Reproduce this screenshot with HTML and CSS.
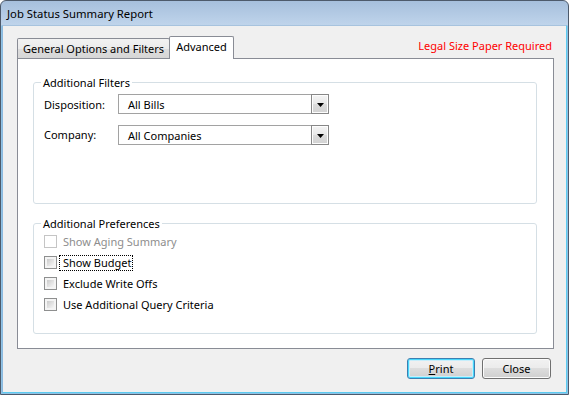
FILE: index.html
```html
<!DOCTYPE html>
<html lang="en">
<head>
<meta charset="utf-8">
<title>Job Status Summary Report</title>
<link rel="stylesheet" href="styles.css">
</head>
<body>
<div class="window">
  <div class="titlebar"><span class="title">Job Status Summary Report</span></div>
  <div class="client">
    <div class="tabrow">
      <div class="tab tab-general">General Options and Filters</div>
      <div class="tab tab-active">Advanced</div>
      <div class="note">Legal Size Paper Required</div>
    </div>
    <div class="panel">
      <fieldset class="group group-filters">
        <legend class="group-title">Additional Filters</legend>
        <div class="fields">
          <div class="field">
            <span class="field-label">Disposition:</span>
            <div class="combo">
              <span class="combo-value">All Bills</span>
              <span class="combo-btn"><svg width="7" height="4" viewBox="0 0 7 4"><polygon points="0,0 7,0 3.5,4" fill="#000"/></svg></span>
            </div>
          </div>
          <div class="field">
            <span class="field-label field-label-up">Company:</span>
            <div class="combo">
              <span class="combo-value">All Companies</span>
              <span class="combo-btn"><svg width="7" height="4" viewBox="0 0 7 4"><polygon points="0,0 7,0 3.5,4" fill="#000"/></svg></span>
            </div>
          </div>
        </div>
      </fieldset>
      <fieldset class="group group-prefs">
        <legend class="group-title">Additional Preferences</legend>
        <div class="checks">
          <div class="check check-disabled"><span class="cb"></span><span class="check-label">Show Aging Summary</span></div>
          <div class="check"><span class="cb"></span><span class="check-label check-focus">Show Budget</span></div>
          <div class="check"><span class="cb"></span><span class="check-label">Exclude Write Offs</span></div>
          <div class="check"><span class="cb"></span><span class="check-label">Use Additional Query Criteria</span></div>
        </div>
      </fieldset>
    </div>
    <div class="buttons">
      <button class="btn btn-default" type="button"><span class="accel">P</span>rint</button>
      <button class="btn btn-close" type="button">Close</button>
    </div>
  </div>
</div>
</body>
</html>
```

FILE: styles.css
```css
html, body {
  margin: 0;
  padding: 0;
  background: #ffffff;
}

body {
  font-family: "Noto Sans", "Open Sans", sans-serif;
  font-size: 11px;
  color: #000000;
}

.window {
  box-sizing: border-box;
  width: 569px;
  height: 395px;
  border: 1px solid #4d5a6b;
  border-radius: 6px 6px 0 0;
  padding: 0 1px 1px 1px;
  background: linear-gradient(#a6bfdc, #bfd4eb 24px, #8fc3e6 25px, #8fc3e6);
  display: flex;
  flex-direction: column;
  overflow: hidden;
}

.titlebar {
  height: 24px;
  flex: none;
  display: flex;
  align-items: center;
  padding-left: 5px;
}

.title {
  font-size: 11.3px;
  line-height: 15px;
  color: #000;
}

.client {
  flex: 1;
  background: #f0f0f0;
  border: 1px solid #a7c3de;
  border-right-color: #5ccbf0;
  border-bottom-color: #5ccbf0;
  border-left-color: #8cb9de;
  display: flex;
  flex-direction: column;
  padding: 10px 12px 0 14px;
}

/* tabs */
.tabrow {
  height: 22px;
  display: flex;
  align-items: flex-end;
  position: relative;
  z-index: 1;
}

.tab {
  box-sizing: border-box;
  height: 20px;
  border: 1px solid #898c95;
  border-bottom: none;
  border-radius: 2px 2px 0 0;
  background: linear-gradient(#f2f2f2, #ebebeb 50%, #dddddd 50%, #d6d6d6);
  text-align: center;
  line-height: 19px;
  white-space: nowrap;
}

.tab-general {
  width: 153px;
}

.tab-active {
  width: 65px;
  height: 23px;
  margin-left: -1px;
  margin-bottom: -1px;
  background: #ffffff;
  line-height: 19px;
  padding-bottom: 2px;
}

.note {
  align-self: flex-start;
  margin-left: auto;
  margin-top: 2px;
  padding-right: 2px;
  color: #ff0000;
  line-height: 15px;
  white-space: nowrap;
}

/* panel */
.panel {
  box-sizing: border-box;
  height: 291px;
  border: 1px solid #898c95;
  background: #ffffff;
  padding: 16px 16px 0 15px;
  display: flex;
  flex-direction: column;
  gap: 12px;
}

.group {
  box-sizing: border-box;
  margin: 0;
  padding: 0 0 0 10px;
  border: 1px solid #d5dfe5;
  border-radius: 3px;
  min-width: 0;
}

.group-filters {
  height: 129px;
}

.group-prefs {
  height: 118px;
}

.group-title {
  margin-left: -3px;
  padding: 0 2px;
  line-height: 15px;
  color: #000;
}

.fields {
  display: flex;
  flex-direction: column;
  gap: 11px;
  padding-top: 4px;
}

.field {
  display: flex;
  align-items: center;
  height: 20px;
}

.field-label {
  width: 74px;
  flex: none;
  line-height: 15px;
}

.field-label-up {
  position: relative;
  top: -1px;
}

.combo {
  box-sizing: border-box;
  width: 211px;
  height: 20px;
  border: 1px solid #a2a2a2;
  display: flex;
  align-items: center;
  position: relative;
  background: #fff;
}

.combo-value {
  flex: 1;
  padding-left: 9px;
  line-height: 15px;
}

.combo-btn {
  box-sizing: border-box;
  width: 18px;
  height: 20px;
  margin: -1px -1px -1px 0;
  border: 1px solid #878787;
  box-shadow: inset 0 0 0 1px #fdfdfd;
  background: linear-gradient(#f4f4f4, #e8e8e8 50%, #dcdcdc 50%, #d2d2d2);
  display: flex;
  align-items: center;
  justify-content: center;
  padding-top: 1px;
}

/* checkboxes */
.checks {
  display: flex;
  flex-direction: column;
}

.check {
  display: flex;
  align-items: center;
  height: 21px;
}

.cb {
  box-sizing: border-box;
  width: 13px;
  height: 13px;
  flex: none;
  border: 1px solid #8e8f8f;
  padding: 2px;
  background: linear-gradient(135deg, #cbcbcb, #f6f6f6) content-box, #f4f4f4;
}

.check-label {
  margin-left: 2px;
  padding: 0 1px 0 3px;
  border: 1px dotted transparent;
  line-height: 14px;
  white-space: nowrap;
}

.check-focus {
  border-color: #000;
}

.check-disabled .cb {
  border-color: #c5c5c5;
  background: #ffffff;
}

.check-disabled .check-label {
  color: #8d8d8d;
}

/* buttons */
.buttons {
  display: flex;
  justify-content: flex-end;
  gap: 7px;
  margin-top: 9px;
  padding-right: 3px;
}

.btn {
  box-sizing: border-box;
  height: 21px;
  margin: 0;
  padding: 0;
  font: inherit;
  color: #000;
  border: 1px solid #707070;
  border-radius: 3px;
  box-shadow: inset 0 0 0 1px #fbfbfb;
  background: linear-gradient(#f2f2f2, #ebebeb 50%, #dddddd 50%, #cfcfcf);
  line-height: 17px;
}

.btn-default {
  width: 68px;
  border-color: #3c7fb1;
  box-shadow: inset 0 0 0 1px #48d7fb, inset 0 0 0 2px #c7eefb;
}

.btn-close {
  width: 69px;
}

.accel {
  text-decoration: underline;
}
```
